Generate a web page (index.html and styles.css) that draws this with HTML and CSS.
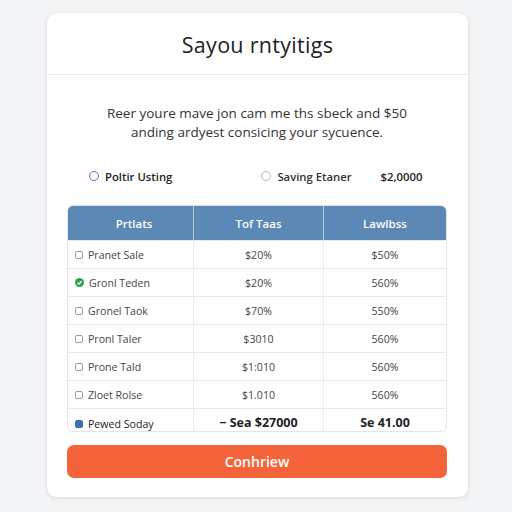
FILE: index.html
```html
<!DOCTYPE html>
<html>
<head>
<meta charset="utf-8">
<link rel="stylesheet" href="styles.css">
</head>
<body>
<div class="card">
  <div class="card-head"><h1 class="title">Sayou rntyitigs</h1></div>
  <div class="card-body">
    <p class="desc">Reer youre mave jon cam me ths sbeck and $50<br>anding ardyest consicing your sycuence.</p>
    <div class="options">
      <label class="opt opt-left"><span class="radio radio-blue"></span>Poltir Usting</label>
      <label class="opt opt-right"><span class="radio"></span>Saving Etaner</label>
      <span class="amount">$2,0000</span>
    </div>
    <div class="table">
      <div class="row head">
        <div class="cell c1">Prtlats</div>
        <div class="cell c2">Tof Taas</div>
        <div class="cell c3">Lawlbss</div>
      </div>
      <div class="row">
        <div class="cell c1"><span class="box"></span>Pranet Sale</div>
        <div class="cell c2">$20%</div>
        <div class="cell c3">$50%</div>
      </div>
      <div class="row">
        <div class="cell c1"><span class="box box-green"><svg viewBox="0 0 10 10" width="9" height="9"><circle cx="5" cy="5" r="5" fill="#2ea44f"/><path d="M2.8 5.2 L4.4 6.7 L7.3 3.6" fill="none" stroke="#fff" stroke-width="1.5"/></svg></span>Gronl Teden</div>
        <div class="cell c2">$20%</div>
        <div class="cell c3">560%</div>
      </div>
      <div class="row">
        <div class="cell c1"><span class="box"></span>Gronel Taok</div>
        <div class="cell c2">$70%</div>
        <div class="cell c3">550%</div>
      </div>
      <div class="row">
        <div class="cell c1"><span class="box"></span>Pronl Taler</div>
        <div class="cell c2">$3010</div>
        <div class="cell c3">560%</div>
      </div>
      <div class="row">
        <div class="cell c1"><span class="box"></span>Prone Tald</div>
        <div class="cell c2">$1:010</div>
        <div class="cell c3">560%</div>
      </div>
      <div class="row">
        <div class="cell c1"><span class="box"></span>Zloet Rolse</div>
        <div class="cell c2">$1.010</div>
        <div class="cell c3">560%</div>
      </div>
      <div class="row total">
        <div class="cell c1"><span class="box box-blue"></span>Pewed Soday</div>
        <div class="cell c2 strong">&minus; Sea $27000</div>
        <div class="cell c3 strong">Se 41.00</div>
      </div>
    </div>
    <button class="btn">Conhriew</button>
  </div>
</div>
</body>
</html>
```
FILE: styles.css
```css
* { box-sizing: border-box; }
html, body { margin: 0; }
body {
  width: 512px;
  height: 512px;
  background: #f3f4f6;
  padding: 13px 44px 0 47px;
  font-family: "Open Sans", "Liberation Sans", sans-serif;
  color: #2b2b2b;
  overflow: hidden;
}
.card {
  background: #fff;
  border-radius: 9px;
  box-shadow: 0 1px 4px rgba(0,0,0,0.10), 0 0 1px rgba(0,0,0,0.08);
  height: 484px;
  display: flex;
  flex-direction: column;
}
.card-head {
  height: 62px;
  border-bottom: 1px solid #e9e9eb;
  display: flex;
  align-items: center;
  justify-content: center;
}
.title {
  margin: 0;
  font-family: "Open Sans", sans-serif;
  font-size: 21.5px;
  font-weight: 500;
  letter-spacing: 0.3px;
  color: #222;
  padding-top: 1px;
}
.card-body {
  padding: 0 21px 0 20px;
  display: flex;
  flex-direction: column;
}
.desc {
  margin: 29px 0 0;
  text-align: center;
  font-size: 13.5px;
  line-height: 19px;
  color: #333;
}
.options {
  display: flex;
  align-items: center;
  height: 20px;
  margin-top: 24px;
  font-size: 11.3px;
  font-weight: 600;
  color: #222;
}
.opt { display: flex; align-items: center; }
.opt-left { margin-left: 22px; }
.opt-right { margin-left: 89px; color: #333; }
.amount { margin-left: 29px; font-weight: 600; }
.radio {
  width: 10px; height: 10px;
  border: 1px solid #b8b8b8;
  border-radius: 50%;
  margin-right: 6px;
}
.radio-blue { border: 1.5px solid #4f7fb8; }
.table {
  margin-top: 19px;
  border: 1px solid #e3e5e8;
  border-radius: 6px;
  overflow: hidden;
}
.row {
  display: grid;
  grid-template-columns: 125px 130px 1fr;
  height: 28px;
  border-top: 1px solid #e8e9eb;
  font-size: 10.6px;
  color: #444;
}
.row.head {
  height: 34px;
  border-top: 0;
  background: #5b88b4;
  color: #fff;
  font-size: 11.5px;
  font-weight: 600;
}
.row.head .cell { justify-content: center; border-left-color: rgba(255,255,255,0.55); }
.row.total { height: 23px; color: #222; }
.row.total .cell { align-items: flex-start; padding-top: 8px; }
.cell {
  display: flex;
  align-items: center;
  justify-content: center;
  border-left: 1px solid #ebecee;
}
.cell.c1 { border-left: 0; justify-content: flex-start; padding-left: 7px; }
.row.total .strong { font-weight: 700; font-size: 12.5px; padding-top: 5px; }
.box {
  width: 8px; height: 8px;
  border: 1px solid #9a9a9a;
  border-radius: 2px;
  margin-right: 5px;
  display: inline-flex;
}
.box-green { border: 0; width: 9px; height: 9px; }
.box-blue { background: #3e6fae; border-color: #3e6fae; margin-top: 3px; }
.btn {
  margin-top: 13px;
  height: 33px;
  border: 0;
  border-radius: 7px;
  background: #f4633a;
  color: #fff;
  font-family: "Open Sans", sans-serif;
  font-size: 14px;
  font-weight: 600;
}
```
